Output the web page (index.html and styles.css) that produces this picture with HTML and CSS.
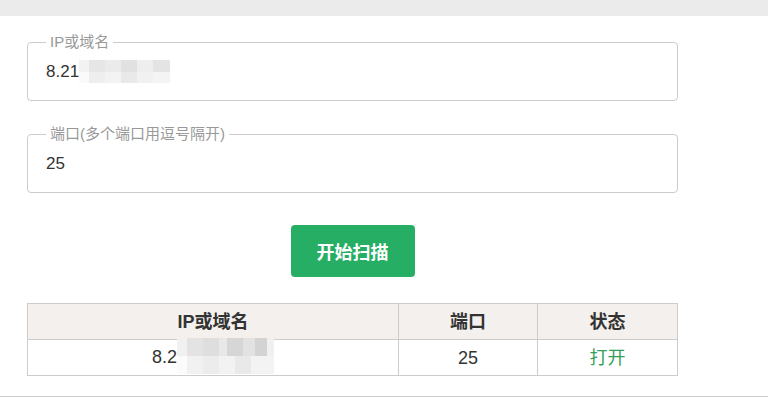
FILE: index.html
```html
<!DOCTYPE html>
<html lang="zh-CN">
<head>
<meta charset="utf-8">
<title>端口扫描</title>
<link rel="stylesheet" href="styles.css">
</head>
<body>
<div class="topbar"></div>
<main class="main">
  <fieldset class="field">
    <legend class="field-legend">IP或域名</legend>
    <div class="field-value">8.21<span class="redact redact-a"></span></div>
  </fieldset>
  <fieldset class="field field-second">
    <legend class="field-legend">端口(多个端口用逗号隔开)</legend>
    <div class="field-value">25</div>
  </fieldset>
  <div class="actions">
    <button class="btn-scan" type="button">开始扫描</button>
  </div>
  <table class="result">
    <thead>
      <tr>
        <th class="col-host">IP或域名</th>
        <th class="col-port">端口</th>
        <th class="col-state">状态</th>
      </tr>
    </thead>
    <tbody>
      <tr>
        <td>8.2<span class="redact redact-b"></span></td>
        <td>25</td>
        <td class="state-open">打开</td>
      </tr>
    </tbody>
  </table>
</main>
<div class="footer-line"></div>
</body>
</html>
```
FILE: styles.css
```css
html, body {
  margin: 0;
  padding: 0;
  background: #ffffff;
  font-family: "Liberation Sans", "Noto Sans CJK SC", sans-serif;
  color: #333333;
}

.topbar {
  height: 16px;
  background: #ebebeb;
}

.main {
  width: 651px;
  margin: 18px 0 0 27px;
}

.field {
  margin: 0;
  padding: 0 18px 12px 18px;
  border: 1px solid #cccccc;
  border-radius: 4px;
  min-width: 0;
}

.field-second {
  margin-top: 25px;
}

.field-legend {
  padding: 0 4px;
  font-size: 15px;
  line-height: 16px;
  height: 16px;
  color: #999999;
}

.field-value {
  height: 32px;
  margin-top: 6px;
  line-height: 32px;
  font-size: 17px;
  color: #333333;
  white-space: nowrap;
}

.redact {
  display: inline-block;
  vertical-align: middle;
}

.redact-a {
  width: 91px;
  height: 23px;
  margin-top: -2px;
  background:
    linear-gradient(to right, #f2f2f2 0 10px, #e6e6e6 10px 26px, #ebebeb 26px 42px, #e1e1e1 42px 58px, #eeeeee 58px 74px, #e4e4e4 74px 91px) top / 100% 12px no-repeat,
    linear-gradient(to right, #fafafa 0 10px, #eeeeee 10px 26px, #f3f3f3 26px 42px, #e9e9e9 42px 58px, #f1f1f1 58px 74px, #f4f4f4 74px 91px) bottom / 100% 11px no-repeat;
}

.redact-b {
  width: 97px;
  height: 36px;
  margin-top: -4px;
  background:
    linear-gradient(to right, #f1f1f1 0 10px, #e3e3e3 10px 26px, #dedede 26px 42px, #e8e8e8 42px 50px, #d6d6d6 50px 66px, #e2e2e2 66px 78px, #d3d3d3 78px 90px, #f0f0f0 90px 97px) top / 100% 18px no-repeat,
    linear-gradient(to right, #fbfbfb 0 10px, #f1f1f1 10px 26px, #ececec 26px 42px, #f2f2f2 42px 58px, #e9e9e9 58px 74px, #f3f3f3 74px 97px) bottom / 100% 18px no-repeat;
}

.actions {
  display: flex;
  justify-content: center;
  margin-top: 32px;
}

.btn-scan {
  width: 124px;
  height: 52px;
  border: none;
  border-radius: 4px;
  background: #27ae65;
  color: #ffffff;
  font-family: "Liberation Sans", "Noto Sans CJK SC", sans-serif;
  font-size: 18px;
  font-weight: bold;
  padding: 0;
  cursor: pointer;
}

.result {
  width: 651px;
  margin-top: 26px;
  border-collapse: collapse;
  font-size: 18px;
  color: #333333;
}

.result th,
.result td {
  height: 35px;
  padding: 0;
  border: 1px solid #cccccc;
  text-align: center;
  line-height: 20px;
  white-space: nowrap;
}

.result th {
  background: #f4f0ed;
  font-weight: bold;
}

.col-host { width: 370px; }
.col-port { width: 138px; }

.state-open {
  color: #33a05a;
}

.footer-line {
  margin-top: 20px;
  border-top: 1px solid #cccccc;
}
```
